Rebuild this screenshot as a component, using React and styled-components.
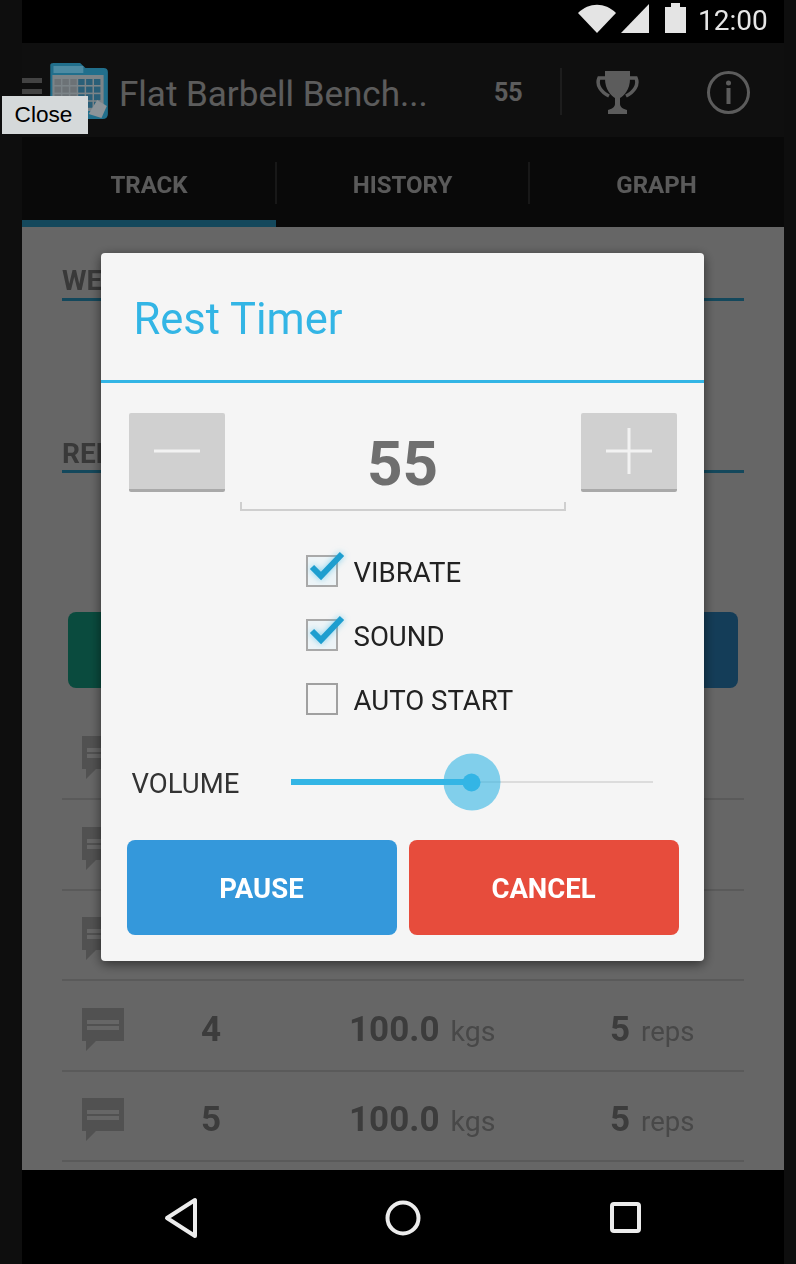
import styled, { createGlobalStyle } from "styled-components";

const GlobalStyle = createGlobalStyle`
  html, body {
    margin: 0;
    background: #0e0e0e;
    font-family: Roboto, "Liberation Sans", sans-serif;
  }
  * { box-sizing: border-box; }
`;

const SET_ROWS = [1, 2, 3, 4, 5];

export default function App() {
  return (
    <>
      <GlobalStyle />
      <CloseButton>Close</CloseButton>
      <Phone>
        <StatusBar>
          <StatusIcons width="108" height="34" viewBox="0 0 108 34">
            <path d="M0 13C11 2 27 2 38 13L19 33Z" />
            <path d="M71 4V33H43Z" />
            <path d="M93 3H102V7H108V33H87V7H93Z" />
          </StatusIcons>
          <Clock>12:00</Clock>
        </StatusBar>

        <Screen>
          <ActionBar>
            <Hamburger>
              <span />
              <span />
              <span />
            </Hamburger>
            <AppIcon />
            <ScreenTitle>Flat Barbell Bench...</ScreenTitle>
            <RestCount>55</RestCount>
            <ActionDivider />
            <ActionIcon $left={34} width="43" height="43" viewBox="0 0 43 43">
              <path d="M9 0H34V8C34 18 28 25 24 27V33C24 36 27 38 31 39V43H12V39C16 38 19 36 19 33V27C15 25 9 18 9 8Z" />
              <path d="M9 7H3C0 14 5 21 13 25M34 7H40C43 14 38 21 30 25" fill="none" stroke="#e6e6e6" strokeWidth="3.5" />
            </ActionIcon>
            <ActionIcon $left={68} width="43" height="43" viewBox="0 0 43 43">
              <circle cx="21.5" cy="21.5" r="20" fill="none" stroke="#e6e6e6" strokeWidth="3" />
              <circle cx="21.5" cy="12" r="2.5" />
              <rect x="19.5" y="17" width="4" height="16" />
            </ActionIcon>
          </ActionBar>

          <Tabs>
            <Tab $active>TRACK</Tab>
            <Tab>HISTORY</Tab>
            <Tab>GRAPH</Tab>
          </Tabs>

          <Content>
            <SectionHeading>WEIGHT</SectionHeading>
            <SectionHeading $second>REPS</SectionHeading>
            <FormButtons>
              <FormButton $color="#1abc9c" />
              <FormButton $color="#3498db" />
            </FormButtons>
            <SetList>
              {SET_ROWS.map((n) => (
                <SetRow key={n}>
                  <CommentIcon />
                  {/* rows 1-3 sit behind the dialog, only the icon shows */}
                  {n > 3 && (
                    <>
                      <SetNumber>{n}</SetNumber>
                      <SetValue>
                        100.0<SetUnit>kgs</SetUnit>
                      </SetValue>
                      <SetValue $tight>
                        5<SetUnit $tight>reps</SetUnit>
                      </SetValue>
                    </>
                  )}
                </SetRow>
              ))}
            </SetList>
          </Content>

          <Overlay>
            <Dialog>
              <DialogTitle>Rest Timer</DialogTitle>

              <Stepper>
                <StepButton>
                  <svg width="46" height="46" viewBox="0 0 46 46">
                    <rect x="0" y="21.5" width="46" height="3" />
                  </svg>
                </StepButton>
                <ValueField>55</ValueField>
                <StepButton>
                  <svg width="46" height="46" viewBox="0 0 46 46">
                    <rect x="0" y="21.5" width="46" height="3" />
                    <rect x="21.5" y="0" width="3" height="46" />
                  </svg>
                </StepButton>
              </Stepper>

              <CheckList>
                <CheckOption label="VIBRATE" checked />
                <CheckOption label="SOUND" checked />
                <CheckOption label="AUTO START" />
              </CheckList>

              <VolumeRow>
                <VolumeLabel>VOLUME</VolumeLabel>
                <Slider>
                  <SliderFill style={{ width: "50%" }} />
                  <SliderThumb style={{ left: "50%" }} />
                </Slider>
              </VolumeRow>

              <DialogButtons>
                <DialogButton $color="#3498db">PAUSE</DialogButton>
                <DialogButton $color="#e74c3c">CANCEL</DialogButton>
              </DialogButtons>
            </Dialog>
          </Overlay>
        </Screen>

        <NavBar>
          <NavIcon width="36" height="42" viewBox="0 0 36 42" $left={141}>
            <path d="M32 3V39L4 21Z" />
          </NavIcon>
          <NavIcon width="36" height="36" viewBox="0 0 36 36" $left={186}>
            <circle cx="18" cy="18" r="15.5" />
          </NavIcon>
          <NavIcon width="34" height="34" viewBox="0 0 34 34" $left={188}>
            <rect x="3" y="3" width="27" height="27" rx="2" />
          </NavIcon>
        </NavBar>
      </Phone>
    </>
  );
}

function AppIcon() {
  const cells = [];
  for (let r = 0; r < 4; r++) {
    for (let c = 0; c < 6; c++) {
      cells.push(
        <rect
          key={r + "-" + c}
          x={8 + c * 7.4}
          y={17 + r * 7.6}
          width="6"
          height="6"
          fill={c > 2 ? "#2a5f78" : "#6c7276"}
        />
      );
    }
  }
  return (
    <AppIconSvg width="64" height="60" viewBox="0 0 60 60" preserveAspectRatio="none">
      <path d="M4 3Q4 1 7 1H32L37 6H54Q58 6 58 10V52Q58 57 53 57H9Q4 57 4 52Z" fill="#216f8c" />
      <rect x="7" y="4" width="28" height="7" fill="#4d8ba3" />
      <rect x="6" y="13" width="48" height="36" fill="#7c8488" />
      {cells}
      <path d="M40 52L48 38L57 44L52 56Z" fill="#8d9499" />
    </AppIconSvg>
  );
}

function CommentIcon() {
  return (
    <CommentSvg width="42" height="43" viewBox="0 0 42 43">
      <path d="M0 0H42V33H14L4 43V33H0Z" fill="#cbcbcb" />
      <rect x="5" y="12" width="32" height="4" fill="#fff" />
      <rect x="5" y="18" width="32" height="4" fill="#fff" />
    </CommentSvg>
  );
}

function CheckOption({ label, checked }) {
  return (
    <CheckRow>
      <CheckBox $checked={checked}>
        {checked && (
          <CheckMark width="42" height="36" viewBox="0 0 42 36">
            <path d="M6 17L15 26L36 4" />
          </CheckMark>
        )}
      </CheckBox>
      {label}
    </CheckRow>
  );
}

const CloseButton = styled.div`
  position: absolute;
  top: 96px;
  left: 2px;
  z-index: 5;
  width: 86px;
  height: 38px;
  padding-right: 3px;
  background: #d5d9da;
  color: #000;
  font-family: "Liberation Sans", Arial, sans-serif;
  font-size: 22.6px;
  line-height: 37px;
  text-align: center;
`;

const Phone = styled.div`
  width: 762px;
  height: 1264px;
  margin-left: 22px;
  display: flex;
  flex-direction: column;
  filter: blur(0.5px);
`;

const StatusBar = styled.div`
  height: 43px;
  flex: none;
  background: #000;
  display: flex;
  align-items: flex-start;
  justify-content: flex-end;
  padding-right: 18px;
`;

const StatusIcons = styled.svg`
  margin-top: 0;
  margin-right: 1px;
  fill: #e4e4e4;
`;

const Clock = styled.div`
  margin-left: 11px;
  width: 68px;
  color: #e6e6e6;
  font-size: 28px;
  line-height: 41px;
`;

const Screen = styled.div`
  position: relative;
  flex: 1;
  overflow: hidden;
  background: #fff;
  display: flex;
  flex-direction: column;
`;

const ActionBar = styled.div`
  height: 94px;
  flex: none;
  padding-top: 4px;
  background: #262626;
  display: flex;
  align-items: center;
`;

const Hamburger = styled.div`
  width: 20px;
  display: flex;
  flex-direction: column;
  gap: 6px;
  margin-top: -2px;

  span {
    height: 5px;
    background: #a8a8a8;
  }
`;

const AppIconSvg = styled.svg`
  position: relative;
  z-index: 2;
  margin-left: 4px;
  flex: none;
`;

const ScreenTitle = styled.div`
  margin: 4px 0 0 9px;
  width: 375px;
  color: #e6e6e6;
  font-size: 35px;
  white-space: nowrap;
`;

const RestCount = styled.div`
  width: 26px;
  color: #e6e6e6;
  font-size: 25px;
  font-weight: 700;
`;

const ActionDivider = styled.div`
  width: 2px;
  height: 47px;
  margin: -2px 0 0 40px;
  background: #4a4a4a;
`;

const ActionIcon = styled.svg`
  margin-left: ${(p) => p.$left}px;
  fill: #e6e6e6;
`;

const Tabs = styled.div`
  height: 90px;
  flex: none;
  background: #181818;
  display: grid;
  grid-template-columns: 254px 253px 255px;
`;

const Tab = styled.div`
  position: relative;
  display: flex;
  align-items: center;
  justify-content: center;
  color: #e0e0e0;
  font-size: 24px;
  font-weight: 700;
  padding-top: 12px;
  border-bottom: 7px solid ${(p) => (p.$active ? "#33b5e5" : "transparent")};

  &:not(:last-child)::after {
    content: "";
    position: absolute;
    right: -1px;
    top: 25px;
    width: 2px;
    height: 42px;
    background: #3c3c3c;
  }
`;

const Content = styled.div`
  padding: 31px 40px 0;
`;

const SectionHeading = styled.div`
  height: ${(p) => (p.$second ? 42 : 43)}px;
  margin-top: ${(p) => (p.$second ? 130 : 0)}px;
  border-bottom: 3px solid #33b5e5;
  color: #8f8f8f;
  font-size: 28px;
  font-weight: 700;
  line-height: 46px;
`;

const FormButtons = styled.div`
  display: grid;
  grid-template-columns: 1fr 1fr;
  gap: 12px;
  margin: 139px 6px 0;
`;

const FormButton = styled.div`
  height: 76px;
  border-radius: 8px;
  background: ${(p) => p.$color};
`;

const SetList = styled.div`
  margin-top: 21.5px;
`;

const SetRow = styled.div`
  height: 90.5px;
  border-bottom: 2px solid #e1e1e1;
  display: grid;
  grid-template-columns: 62px 174px 312px 1fr;
  align-items: center;
  padding-top: 8px;
`;

const CommentSvg = styled.svg`
  margin-left: 20px;
  display: block;
`;

const SetNumber = styled.div`
  text-align: center;
  color: #969696;
  font-size: 35px;
  font-weight: 700;
`;

const SetValue = styled.div`
  padding-left: ${(p) => (p.$tight ? 0 : 51)}px;
  color: #969696;
  font-size: 35px;
  font-weight: 700;
  white-space: nowrap;
`;

const SetUnit = styled.span`
  margin-left: 11px;
  color: #b4b4b4;
  font-size: ${(p) => (p.$tight ? 27.5 : 28.5)}px;
  font-weight: 400;
`;

const Overlay = styled.div`
  position: absolute;
  inset: 0;
  z-index: 1;
  background: rgba(0, 0, 0, 0.6);
  display: flex;
  justify-content: center;
  align-items: flex-start;
  padding: 210px 2px 0 0;
`;

const Dialog = styled.div`
  width: 603px;
  height: 708px;
  background: #f5f5f5;
  border-radius: 4px;
  box-shadow: 0 3px 12px rgba(0, 0, 0, 0.55);
`;

const DialogTitle = styled.div`
  height: 130px;
  padding: 42px 0 0 33px;
  border-bottom: 3px solid #33b5e5;
  color: #33b5e5;
  font-size: 43.5px;
  line-height: 50px;
`;

const Stepper = styled.div`
  display: flex;
  justify-content: space-between;
  align-items: flex-start;
  padding: 30px 27px 0 28px;
`;

const StepButton = styled.div`
  width: 96px;
  height: 79px;
  background: #d0d0d0;
  border-bottom: 3px solid #a9a9a9;
  border-radius: 2px;
  display: flex;
  align-items: center;
  justify-content: center;

  svg {
    fill: #f2f2f2;
  }
`;

const ValueField = styled.div`
  position: relative;
  width: 326px;
  height: 98px;
  border-bottom: 2px solid #cfcfcf;
  color: #6f6f6f;
  font-size: 62px;
  font-weight: 700;
  text-align: center;
  line-height: 102px;

  &::before,
  &::after {
    content: "";
    position: absolute;
    bottom: 0;
    width: 2px;
    height: 7px;
    background: #cfcfcf;
  }
  &::before {
    left: 0;
  }
  &::after {
    right: 0;
  }
`;

const CheckList = styled.div`
  margin: 29px 0 0 205px;
`;

const CheckRow = styled.div`
  height: 64px;
  display: flex;
  align-items: center;
  gap: 16px;
  color: #222;
  font-size: 27.6px;
`;

const CheckBox = styled.div`
  position: relative;
  width: 32px;
  height: 32px;
  margin-top: -2px;
  border: 2px solid ${(p) => (p.$checked ? "#a9a9a9" : "#a0a0a0")};
  background: ${(p) => (p.$checked ? "#edf4f7" : "transparent")};
`;

const CheckMark = styled.svg`
  position: absolute;
  left: -2px;
  top: -7px;
  overflow: visible;
  filter: drop-shadow(0 0 3px rgba(51, 181, 229, 0.6));

  path {
    fill: none;
    stroke: #1e9ecf;
    stroke-width: 6;
  }
`;

const VolumeRow = styled.div`
  height: 58px;
  margin-top: 21px;
  padding-left: 31px;
  display: flex;
  align-items: center;
`;

const VolumeLabel = styled.div`
  width: 159px;
  margin-top: 3px;
  color: #333;
  font-size: 27.5px;
`;

const Slider = styled.div`
  position: relative;
  width: 362px;
  height: 2px;
  background: #dcdcdc;
`;

const SliderFill = styled.div`
  position: absolute;
  left: 0;
  top: -2px;
  height: 6px;
  background: #33b5e5;
`;

const SliderThumb = styled.div`
  position: absolute;
  top: 1px;
  width: 57px;
  height: 57px;
  transform: translate(-50%, -50%);
  border-radius: 50%;
  background: rgba(51, 181, 229, 0.6);
  display: flex;
  align-items: center;
  justify-content: center;

  &::after {
    content: "";
    width: 18px;
    height: 18px;
    border-radius: 50%;
    background: #33b5e5;
  }
`;

const DialogButtons = styled.div`
  display: grid;
  grid-template-columns: 270px 270px;
  gap: 12px;
  margin-top: 29px;
  padding-left: 26px;
`;

const DialogButton = styled.div`
  height: 95px;
  padding-top: 2px;
  border-radius: 8px;
  background: ${(p) => p.$color};
  color: #fff;
  font-size: 27.5px;
  font-weight: 700;
  display: flex;
  align-items: center;
  justify-content: center;
`;

const NavBar = styled.div`
  height: 94px;
  flex: none;
  background: #000;
  display: flex;
  align-items: center;
  padding-top: 2px;
`;

const NavIcon = styled.svg`
  margin-left: ${(p) => p.$left}px;
  fill: none;
  stroke: #ececec;
  stroke-width: 4;
  stroke-linejoin: round;
`;
